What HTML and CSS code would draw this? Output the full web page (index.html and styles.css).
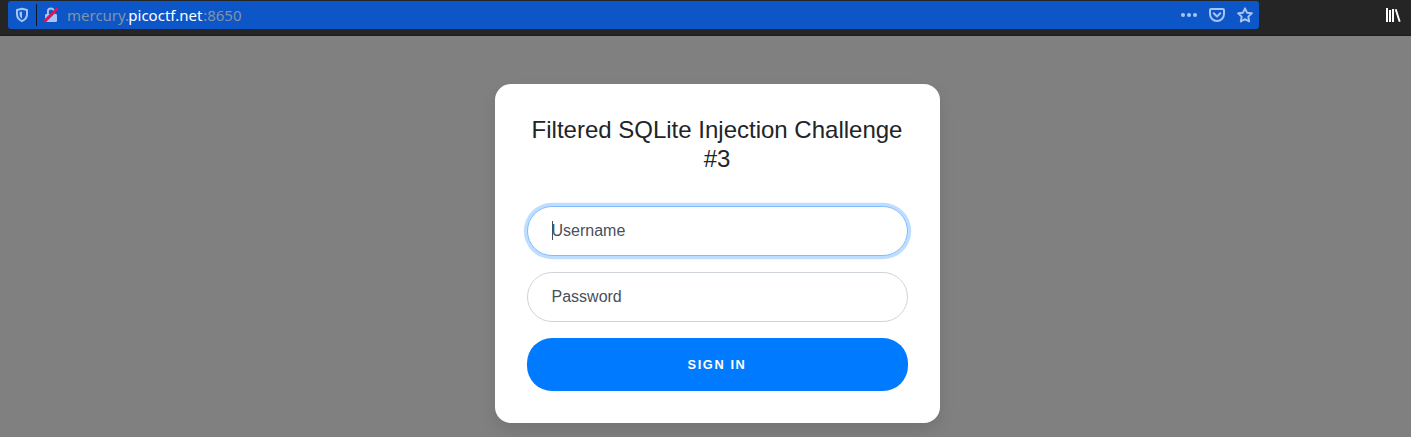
FILE: index.html
```html
<!DOCTYPE html>
<html lang="en">
<head>
<meta charset="utf-8">
<title>Login</title>
<link rel="stylesheet" href="styles.css">
</head>
<body>
<header class="toolbar">
  <div class="urlbar">
    <svg class="shield" width="14" height="16" viewBox="0 0 14 16"><path d="M7 1.800 12 3v4.200c0 3.100-1.800 5.400-5 7-3.200-1.600-5-3.900-5-7V3z" fill="none" stroke="#a9c4f2" stroke-width="2" stroke-linejoin="round"/><path d="M7 4.500v7C5.300 10.400 4.600 9 4.600 7.200V5z" fill="#a9c4f2"/></svg>
    <span class="divider"></span>
    <svg class="lock" width="16" height="16" viewBox="0 0 16 16"><path d="M4.900 8V4.700a3.100 3.100 0 0 1 6.200 0V8" fill="none" stroke="#a9c4f2" stroke-width="2"/><rect x="2" y="7" width="12" height="8" rx="1.300" fill="#a9c4f2"/><path d="M1.300 14.800 14.900 1.200" stroke="#0c56c8" stroke-width="3"/><path d="M1.200 14.600 14.600 1.200" stroke="#f0124c" stroke-width="2.200"/></svg>
    <span class="url">mercury.<b class="domain">picoctf.net</b>:8650</span>
    <div class="actions">
      <svg width="16" height="16" viewBox="0 0 16 16" fill="#a9c4f2"><circle cx="2" cy="8" r="2"/><circle cx="8" cy="8" r="2"/><circle cx="14" cy="8" r="2"/></svg>
      <svg width="16" height="16" viewBox="0 0 16 16" fill="none" stroke="#a9c4f2" stroke-width="2" stroke-linecap="round" stroke-linejoin="round"><path d="M2.200 2h11.600q1.200 0 1.200 1.200V7a7 7 0 0 1-14 0V3.200Q1 2 2.200 2zM4.700 6.300 8 9.400l3.300-3.100"/></svg>
      <svg width="16" height="16" viewBox="0 0 16 16" fill="none" stroke="#a9c4f2" stroke-width="1.900" stroke-linejoin="round"><path d="m8 1.300 2 4.400 4.900.600-3.600 3.300.9 4.900L8 12.100l-4.200 2.400.9-4.900L1.100 6.300 6 5.700z"/></svg>
    </div>
  </div>
  <svg class="library" width="16" height="16" viewBox="0 0 16 16" fill="none" stroke="#fff" stroke-width="2"><path d="M2 1v14M5 3v12M8 2v13"/><path d="m10.700 2.300 4 12.400" stroke-width="1.900"/></svg>
</header>
<main class="page">
  <form class="card">
    <h1 class="title">Filtered SQLite Injection Challenge #3</h1>
    <div class="field">
      <input class="input focused" type="text" placeholder="Username">
      <span class="caret"></span>
    </div>
    <div class="field">
      <input class="input" type="password" placeholder="Password">
    </div>
    <button class="submit" type="submit">Sign in</button>
  </form>
</main>
</body>
</html>
```
FILE: styles.css
```css
* { box-sizing: border-box; }
body {
  margin: 0;
  height: 437px;
  overflow: hidden;
  background: #808080;
  font-family: "Liberation Sans", Arial, sans-serif;
}
.toolbar {
  display: flex;
  justify-content: space-between;
  align-items: flex-start;
  height: 36px;
  padding: 1px 10px 0 8px;
  background: #252525;
  border-bottom: 1px solid #1b1b1b;
}
.urlbar {
  display: flex;
  align-items: center;
  width: 1251px;
  height: 28px;
  padding: 0 6px 0 7px;
  border-radius: 3px;
  background: #0c56c8;
}
.divider {
  width: 1px;
  height: 22px;
  margin: 0 6px 0 7px;
  background: #101725;
}
.url {
  margin-left: 8px;
  font: 15px/28px "Noto Sans", sans-serif;
  color: #8592a6;
}
.domain { margin: 0 .8px 0 -.8px; font-weight: 400; color: #fff; }
.actions {
  display: flex;
  gap: 12px;
  margin-left: auto;
}
.library { margin-top: 6px; }
.page { display: flex; justify-content: center; padding: 48px 0 0 24px; }
.card {
  width: 445px;
  height: 339px;
  padding: 32px;
  border-radius: 16px;
  background: #fff;
  box-shadow: 0 8px 16px rgba(0, 0, 0, .1);
}
.title {
  margin: 0 1px 32.4px 0;
  font-size: 24px;
  font-weight: 400;
  line-height: 28.8px;
  text-align: center;
  color: #212529;
}
.field { position: relative; margin-bottom: 16px; }
.input {
  display: block;
  width: 100%;
  height: 50px;
  padding: 0 24px 0 23.5px;
  border: 1px solid #ced4da;
  border-radius: 25px;
  background: #fff;
  font: 16px/24px "Liberation Sans", Arial, sans-serif;
  outline: none;
}
.input::placeholder { color: #495057; opacity: 1; }
.focused { border-color: #80bdff; box-shadow: 0 0 0 3.200px rgba(0, 123, 255, .25); }
.caret {
  position: absolute;
  left: 25px;
  top: 15px;
  width: 1px;
  height: 19px;
  background: #495057;
}
.submit {
  display: block;
  width: 100%;
  height: 53px;
  padding: 0 1px 0 0;
  border: 0;
  border-radius: 25px;
  background: #007bff;
  color: #fff;
  font: bold 12.8px/19px "Liberation Sans", Arial, sans-serif;
  letter-spacing: 1.6px;
  text-transform: uppercase;
}
```
